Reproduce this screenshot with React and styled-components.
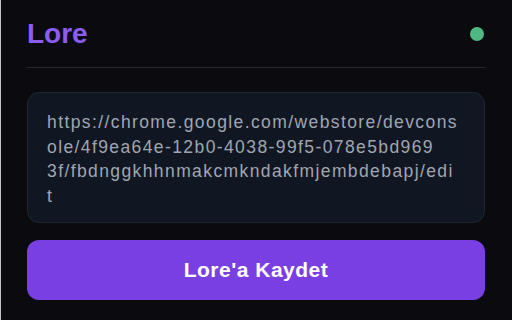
import React from "react";
import styled, { createGlobalStyle } from "styled-components";

const GlobalStyle = createGlobalStyle`
  html, body {
    margin: 0;
    padding: 0;
    background: #0b0b0f;
  }
  body {
    font-family: "Liberation Sans", Arial, sans-serif;
  }
`;

const Popup = styled.div`
  box-sizing: border-box;
  width: 512px;
  height: 320px;
  padding: 0 27px 0 26px;
  background: #0b0b0f;
  border-left: 1px solid #c4c4c6;
  display: flex;
  flex-direction: column;
`;

const Header = styled.header`
  display: flex;
  align-items: center;
  justify-content: space-between;
  padding: 20px 0 19px;
  border-bottom: 1px solid #262a33;
`;

const Title = styled.h1`
  margin: 0;
  font-size: 28px;
  line-height: 28px;
  font-weight: 700;
  color: #8b5cf6;
`;

const StatusDot = styled.span`
  width: 14px;
  height: 14px;
  margin-right: 1px;
  border-radius: 50%;
  background: #50b883;
`;

const UrlField = styled.div`
  box-sizing: border-box;
  margin-top: 24px;
  height: 131px;
  padding: 17px 19px 13px;
  background: #111722;
  border: 1px solid #1f2633;
  border-radius: 12px;
  color: #a0a6b1;
  font-size: 17.5px;
  line-height: 24.5px;
  letter-spacing: ${(p) => p.$spacing}px;
  overflow: hidden;
`;

const UrlLine = styled.span`
  display: block;
  white-space: nowrap;
`;

const SaveButton = styled.button`
  margin-top: 17px;
  height: 60px;
  border: none;
  border-radius: 12px;
  background: #7a3fe3;
  color: #ffffff;
  font-family: "Liberation Sans", Arial, sans-serif;
  font-size: 21px;
  font-weight: 700;
  letter-spacing: 0.5px;
  cursor: pointer;
`;

const url =
  "https://chrome.google.com/webstore/devconsole/4f9ea64e-12b0-4038-99f5-078e5bd9693f/fbdnggkhhnmakcmkndakfmjembdebapj/edit";

const breaks = [42, 80, 119];

function splitLines(text, cuts) {
  const out = [];
  let start = 0;
  cuts.forEach((c) => {
    out.push(text.slice(start, c));
    start = c;
  });
  out.push(text.slice(start));
  return out;
}

export default function App() {
  const lines = splitLines(url, breaks);
  return (
    <>
      <GlobalStyle />
      <Popup>
        <Header>
          <Title>Lore</Title>
          <StatusDot />
        </Header>
        <UrlField role="textbox" aria-readonly="true" $spacing={1.4}>
          {lines.map((l, i) => (
            <UrlLine key={i}>{l}</UrlLine>
          ))}
        </UrlField>
        <SaveButton>Lore'a Kaydet</SaveButton>
      </Popup>
    </>
  );
}
